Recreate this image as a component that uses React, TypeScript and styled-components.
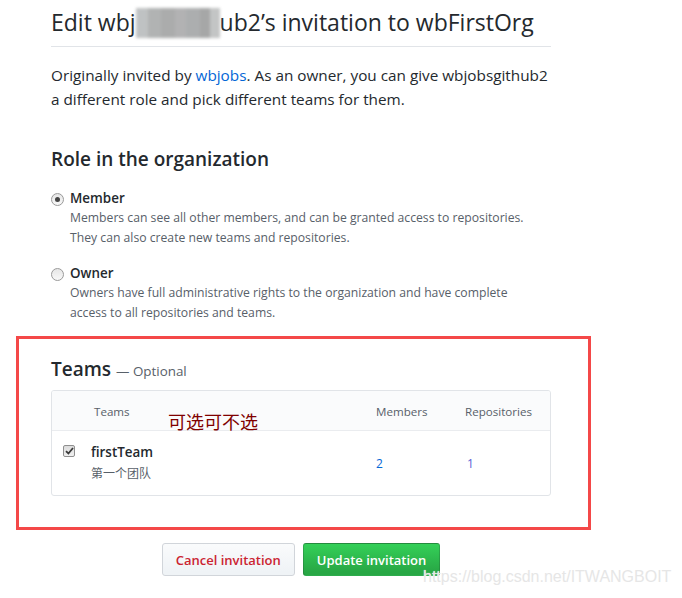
import styled, { createGlobalStyle } from 'styled-components';

const GlobalStyle = createGlobalStyle`
    body {
        margin: 0;
        background: #fff;
        font-family: 'Open Sans', 'Noto Sans CJK SC', sans-serif;
        color: #24292e;
    }
`;

type Role = {
    name: string;
    note: string[];
    checked?: boolean;
};

const roles: Role[] = [
    {
        name: 'Member',
        note: [
            'Members can see all other members, and can be granted access to repositories.',
            'They can also create new teams and repositories.',
        ],
        checked: true,
    },
    {
        name: 'Owner',
        note: [
            'Owners have full administrative rights to the organization and have complete',
            'access to all repositories and teams.',
        ],
    },
];

export default function App() {
    return (
        <Page>
            <GlobalStyle />
            <Content>
                <Title>
                    Edit wbj<Mosaic />ub2’s invitation to wbFirstOrg
                </Title>
                <Lead>
                    Originally invited by <Link>wbjobs</Link>. As an owner, you can give
                    wbjobsgithub2 a different role and pick different teams for them.
                </Lead>

                <SubTitle>Role in the organization</SubTitle>
                {roles.map(role => (
                    <RoleRow key={role.name}>
                        <Radio checked={role.checked} />
                        <div>
                            <RoleName>{role.name}</RoleName>
                            {role.note.map(line => (
                                <Note key={line}>{line}</Note>
                            ))}
                        </div>
                    </RoleRow>
                ))}

                <TeamsTitle>
                    Teams <Optional>— Optional</Optional>
                </TeamsTitle>
                <Table>
                    <HeadRow>
                        <span />
                        <HeadTeams>Teams</HeadTeams>
                        <span>Members</span>
                        <span>Repositories</span>
                    </HeadRow>
                    <BodyRow>
                        <CheckBox>
                            <svg width="9" height="8" viewBox="0 0 9 8">
                                <path d="M1 4.2 L3.4 6.5 L8 1" fill="none" stroke="#3a3a3a" strokeWidth="1.8" />
                            </svg>
                        </CheckBox>
                        <div>
                            <TeamName>firstTeam</TeamName>
                            <TeamNote>第一个团队</TeamNote>
                        </div>
                        <Count>2</Count>
                        <Count $purple>1</Count>
                    </BodyRow>
                </Table>

                <Actions>
                    <Button>Cancel invitation</Button>
                    <Button $primary>Update invitation</Button>
                </Actions>
            </Content>

            <RedFrame />
            <Annotation>可选可不选</Annotation>
            <Watermark>https://blog.csdn.net/ITWANGBOIT</Watermark>
        </Page>
    );
}

const Page = styled.div`
    position: relative;
    width: 682px;
    height: 598px;
    overflow: hidden;
`;

const Content = styled.div`
    width: 500px;
    margin-left: 51px;
    padding-top: 7px;
`;

const Title = styled.h1`
    margin: 0;
    padding-bottom: 8px;
    border-bottom: 1px solid #e1e4e8;
    font-size: 23px;
    font-weight: 400;
    line-height: 30px;
    white-space: nowrap;
`;

const Mosaic = styled.span`
    display: inline-block;
    width: 84px;
    height: 30px;
    vertical-align: -7px;
    background: linear-gradient(
        90deg,
        #b9bcbd 0 14%,
        #a9abab 14% 30%,
        #a3a4a4 30% 46%,
        #aaaaab 46% 60%,
        #a4a6a7 60% 76%,
        #9d9e9e 76% 88%,
        #bdbfbf 88% 100%
    );
    filter: blur(1.5px);
    opacity: 0.9;
`;

const Lead = styled.p`
    margin: 16px 0 0;
    font-size: 15.3px;
    line-height: 24px;
`;

const Link = styled.span`
    color: #0366d6;
`;

const SubTitle = styled.h2`
    margin: 36px 0 16px;
    font-size: 19px;
    font-weight: 600;
    line-height: 25px;
`;

const RoleRow = styled.div`
    display: flex;
    gap: 6px;
    margin-bottom: 15px;
`;

const Radio = styled.span<{ checked?: boolean }>`
    position: relative;
    flex: none;
    width: 11px;
    height: 11px;
    margin: 5px 0 0 0;
    border: 1px solid #9a9a9a;
    border-radius: 50%;
    background: linear-gradient(#e6e6e6, #f8f8f8);
    &::after {
        content: '';
        display: ${p => (p.checked ? 'block' : 'none')};
        position: absolute;
        left: 3px;
        top: 3px;
        width: 5px;
        height: 5px;
        border-radius: 50%;
        background: #444;
    }
`;

const RoleName = styled.div`
    font-size: 13.4px;
    font-weight: 600;
    line-height: 20px;
`;

const Note = styled.div`
    font-size: 12.2px;
    line-height: 20px;
    color: #586069;
`;

const TeamsTitle = styled.h2`
    margin: 34px 0 6px;
    font-size: 19px;
    font-weight: 600;
    line-height: 25px;
`;

const Optional = styled.span`
    font-size: 13.4px;
    font-weight: 400;
    color: #586069;
`;

const Table = styled.div`
    border: 1px solid #e1e4e8;
    border-radius: 3px;
    overflow: hidden;
`;

const grid = `
    display: grid;
    grid-template-columns: 39px 285px 89px 1fr;
`;

const HeadRow = styled.div`
    ${grid}
    height: 38px;
    align-items: center;
    padding-top: 1px;
    background: #fafbfc;
    border-bottom: 1px solid #eaecef;
    font-size: 11.6px;
    color: #586069;
`;

const HeadTeams = styled.span`
    padding-left: 3px;
`;

const BodyRow = styled.div`
    ${grid}
    height: 64px;
    align-items: center;
`;

const CheckBox = styled.span`
    display: flex;
    align-items: center;
    justify-content: center;
    align-self: start;
    width: 10px;
    height: 10px;
    margin: 14px 0 0 11px;
    border: 1px solid #8f8f8f;
    border-radius: 2px;
    background: linear-gradient(#dcdcdc, #f0f0f0);
`;

const TeamName = styled.div`
    font-size: 13.4px;
    font-weight: 600;
    line-height: 22px;
`;

const TeamNote = styled.div`
    font-size: 12px;
    line-height: 22px;
    color: #586069;
`;

const Count = styled.span<{ $purple?: boolean }>`
    font-size: 12px;
    color: ${p => (p.$purple ? '#5a5fd6' : '#0366d6')};
    padding-left: ${p => (p.$purple ? '2px' : '0')};
`;

const Actions = styled.div`
    display: flex;
    justify-content: center;
    gap: 8px;
    margin-top: 31px;
    padding-top: 15px;
    border-top: 1px solid #d1d5da;
`;

const Button = styled.button<{ $primary?: boolean }>`
    height: 33px;
    padding: 0 13px;
    border-radius: 3px;
    font-family: 'Open Sans', sans-serif;
    font-size: 13px;
    font-weight: 600;
    border: 1px solid ${p => (p.$primary ? 'rgba(27, 31, 35, 0.2)' : '#d1d5da')};
    color: ${p => (p.$primary ? '#fff' : '#cb2431')};
    background: ${p =>
        p.$primary
            ? 'linear-gradient(-180deg, #34d058 0%, #28a745 90%)'
            : 'linear-gradient(-180deg, #fafbfc 0%, #eff3f6 90%)'};
`;

const RedFrame = styled.div`
    position: absolute;
    left: 16px;
    top: 336px;
    width: 569px;
    height: 188px;
    border: 3px solid #f44848;
    pointer-events: none;
`;

const Annotation = styled.div`
    position: absolute;
    left: 168px;
    top: 409px;
    font-family: 'Noto Sans CJK SC', sans-serif;
    font-size: 18px;
    line-height: 24px;
    color: #800000;
`;

const Watermark = styled.div`
    position: absolute;
    left: 423px;
    top: 566px;
    font-family: 'Liberation Sans', Arial, sans-serif;
    font-size: 16px;
    line-height: 22px;
    color: #e6e6e6;
    text-shadow: 0 0 1px #fff;
`;
